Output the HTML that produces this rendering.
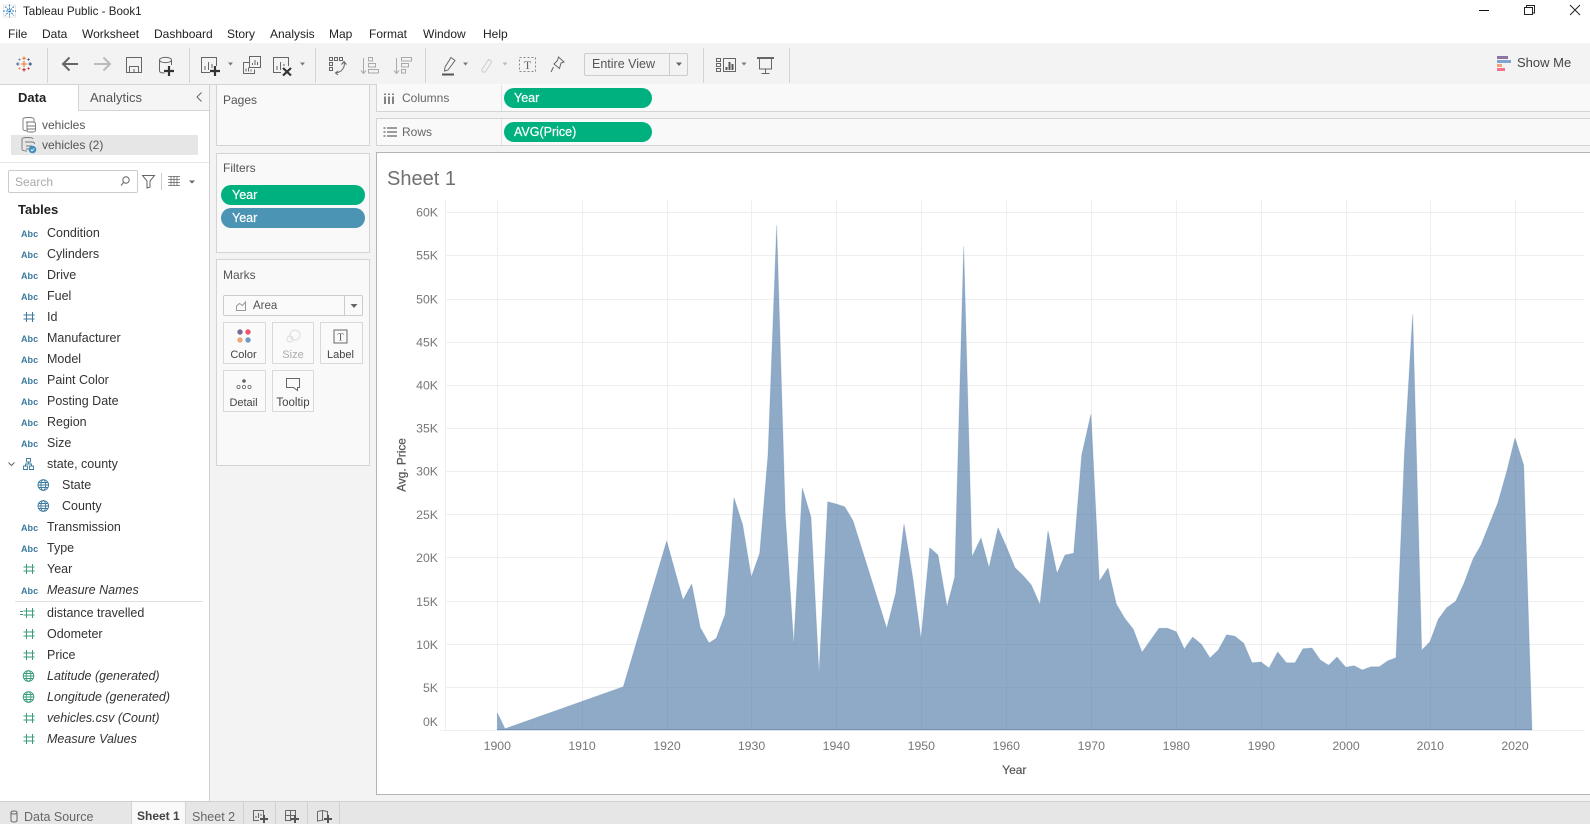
<!DOCTYPE html>
<html lang="en">
<head>
<meta charset="utf-8">
<title>Tableau Public - Book1</title>
<style>
html,body{margin:0;padding:0;background:#fff}
#p{position:relative;width:1590px;height:824px;overflow:hidden;background:#fff;font-family:"Liberation Sans",Arial,sans-serif;color:#333}
#p div{position:absolute;box-sizing:border-box}
.t{position:absolute;white-space:nowrap;line-height:16px;font-size:12px}
.f{font-size:12.5px;left:47px;color:#333}
.i{font-style:italic}
.a{position:absolute;left:21px;font-size:9px;font-weight:bold;color:#3b7a9e;line-height:12px;white-space:nowrap;letter-spacing:.05px}
.l{color:#555}
.b{text-align:center;font-size:11px;color:#444}
.c{background:#f9f9f9;border:1px solid #d4d4d4}
.k{background:#fafafa;border:1px solid #d9d9d9}
.pill{border-radius:10px;height:20px}
.pt{color:#fff;font-size:12.5px;-webkit-text-stroke:.2px #fff}
svg{position:absolute;left:0;top:0}
</style>
</head>
<body>
<div id="p">
<!-- toolbar -->
<div style="left:0;top:43px;width:1590px;height:42px;background:#f3f3f3;border-bottom:1px solid #d4d4d4"></div>
<!-- body bg -->
<div style="left:209px;top:85px;width:1381px;height:717px;background:#f3f3f3"></div>
<!-- left panel -->
<div style="left:0;top:85px;width:210px;height:717px;background:#fff;border-right:1px solid #d0d0d0"></div>
<div style="left:78px;top:85px;width:131px;height:26px;background:#f5f5f5;border-left:1px solid #d4d4d4;border-bottom:1px solid #d4d4d4"></div>
<div style="left:11px;top:135px;width:187px;height:20px;background:#e6e6e6"></div>
<div style="left:0;top:162px;width:209px;height:1px;background:#e6e6e6"></div>
<div style="left:8px;top:170px;width:130px;height:23px;background:#fff;border:1px solid #ccc;border-radius:2px"></div>
<div style="left:15px;top:601px;width:188px;height:1px;background:#e0e0e0"></div>
<!-- cards -->
<div class="c" style="left:216px;top:84px;width:154px;height:62px"></div>
<div class="c" style="left:216px;top:153px;width:154px;height:100px"></div>
<div class="pill" style="left:221px;top:185px;width:144px;background:#00b180"></div>
<div class="pill" style="left:221px;top:208px;width:144px;background:#4b94b3"></div>
<div class="c" style="left:216px;top:259px;width:154px;height:207px"></div>
<div style="left:223px;top:295px;width:140px;height:21px;background:#fafafa;border:1px solid #ccc;border-radius:2px"></div>
<div style="left:344px;top:296px;width:1px;height:19px;background:#ccc"></div>
<div class="k" style="left:223px;top:322px;width:43px;height:42px"></div>
<div class="k" style="left:272px;top:322px;width:42px;height:42px"></div>
<div class="k" style="left:320px;top:322px;width:43px;height:42px"></div>
<div class="k" style="left:223px;top:370px;width:43px;height:42px"></div>
<div class="k" style="left:272px;top:370px;width:42px;height:42px"></div>
<!-- shelves -->
<div style="left:376px;top:84px;width:1214px;height:28px;background:#f9f9f9;border-bottom:1px solid #d4d4d4;border-left:1px solid #d4d4d4"></div>
<div style="left:376px;top:118px;width:1214px;height:28px;background:#f9f9f9;border-top:1px solid #d4d4d4;border-bottom:1px solid #d4d4d4;border-left:1px solid #d4d4d4"></div>
<div style="left:501px;top:85px;width:1px;height:26px;background:#e0e0e0"></div>
<div style="left:501px;top:119px;width:1px;height:26px;background:#e0e0e0"></div>
<div class="pill" style="left:504px;top:88px;width:148px;background:#00b180"></div>
<div class="pill" style="left:504px;top:122px;width:148px;background:#00b180"></div>
<!-- view -->
<div style="left:376px;top:152px;width:1214px;height:643px;background:#fff;border:1px solid #b4b4b4;border-right:0"></div>
<!-- entire view -->
<div style="left:584px;top:53px;width:104px;height:23px;background:#f3f3f3;border:1px solid #ccc;border-radius:2px"></div>
<div style="left:669px;top:54px;width:1px;height:21px;background:#ccc"></div>
<!-- bottom -->
<div style="left:0;top:801px;width:1590px;height:23px;background:#e6e6e6;border-top:1px solid #d0d0d0"></div>
<div style="left:131px;top:802px;width:55px;height:22px;background:#f9f9f9;border-left:1px solid #d4d4d4;border-right:1px solid #d4d4d4"></div>
<div style="left:243px;top:802px;width:1px;height:22px;background:#d0d0d0"></div>
<div style="left:275px;top:802px;width:1px;height:22px;background:#d0d0d0"></div>
<div style="left:307px;top:802px;width:1px;height:22px;background:#d0d0d0"></div>
<div style="left:339px;top:802px;width:1px;height:22px;background:#d0d0d0"></div>

<svg width="1590" height="824" viewBox="0 0 1590 824" fill="none">
<!-- grid -->
<g stroke="#efefef" stroke-width="1" shape-rendering="crispEdges">
<path d="M445 212.5H1584M445 255.5H1584M445 299.5H1584M445 342.5H1584M445 385.5H1584M445 428.5H1584M445 471.5H1584M445 514.5H1584M445 557.5H1584M445 601.5H1584M445 644.5H1584M445 687.5H1584M440 730.5H1585"/>
<path d="M445.5 200V730M497.5 200V730M582.5 200V730M667.5 200V730M751.5 200V730M836.5 200V730M921.5 200V730M1006.5 200V730M1091.5 200V730M1176.5 200V730M1261.5 200V730M1346.5 200V730M1430.5 200V730M1515.5 200V730"/>
</g>
<polygon fill="#4e79a7" fill-opacity=".63" stroke="#4e79a7" stroke-opacity=".22" stroke-width="1" stroke-linejoin="bevel" points="497.3,730 497.3,712.7 505,728.7 623.3,686.7 666.7,541 683,600 691.7,584 700.3,627.7 709,643 716.3,638.3 725.3,614 734,497.7 742.7,525 751.3,577.3 759.7,553.3 768,455 776.7,225 785.3,515 793.7,644 802.3,488 811,517.3 819,674 827.7,501.7 836.3,504 844.7,506.7 853,520.7 886.7,628.3 895.7,593.3 904,524 912.7,577.3 921,639 929.7,547.7 938,555 947,606.7 954.7,577.3 963.7,246 972,556.7 981,538 989,567.7 998,527.7 1006.5,547 1015,567.7 1023.5,576 1031.3,585 1040,604.7 1048,530.7 1057,573.3 1065,555 1073.7,553.3 1081.7,455 1091,414 1099.3,581.3 1108,568 1116.3,604 1124.7,618.3 1133.3,629.3 1142,652.3 1159,628.3 1167.7,628.3 1176.3,631.7 1184.3,649 1192.7,637 1201.3,644.3 1210,658 1218.3,650 1226.7,634.7 1235,636.3 1243.7,643.3 1252,662.7 1261,662 1269,668 1277.7,652 1286.3,662.7 1295,662.7 1303,648.7 1312,648 1320.3,660 1328.7,665.3 1337,657 1345.7,667.3 1354,665.7 1362.3,670 1371,666.7 1379.3,666.7 1388,660.7 1396,657.7 1404.5,452 1412.7,314 1421.7,650.3 1430,641.7 1438.3,619.3 1446.7,607.7 1455.7,601.3 1464,583.3 1473,559 1481,545 1489,525 1497.7,503.3 1506.7,471.7 1515,438 1523.7,465 1532,730"/>
<path d="M497 729.5H1532" stroke="#7391b5" stroke-width="1"/>

<!-- window controls -->
<path d="M1479 10.5H1489" stroke="#111" stroke-width="1"/>
<path d="M1524.5 7.5H1532.5V14.5H1524.5ZM1526.5 7V5.5H1534.5V13H1533" stroke="#222" stroke-width="1"/>
<path d="M1570 5L1580 15M1580 5L1570 15" stroke="#222" stroke-width="1"/>

<!-- title logo -->
<rect x="3.5" y="5" width="12" height="12" stroke="#d8d8d8" stroke-width=".6"/>
<path d="M9.5 4.500v13M3 11h13M5 6.500l9 9M14 6.500l-9 9" stroke="#2f7fc0" stroke-width="1" stroke-dasharray="2 1"/>

<!-- tableau logo -->
<g stroke-width="1">
<path d="M21 64h6M24 61v6" stroke="#e8762b" stroke-width="1.100"/>
<path d="M24 56.500v3.500M22.200 58.200h3.600" stroke="#e8762b"/>
<path d="M24 68v3.500M22.200 69.800h3.600" stroke="#c72035"/>
<path d="M16 64h3.500M17.800 62.200v3.600" stroke="#5b6591"/>
<path d="M28.500 64h3.500M30.200 62.200v3.600" stroke="#1f457e"/>
<path d="M18.500 59.500h2M19.500 58.500v2" stroke="#59879b"/>
<path d="M27.500 59.500h2M28.500 58.500v2" stroke="#1f447e"/>
<path d="M18.500 68.500h2M19.500 67.500v2" stroke="#eb9129"/>
<path d="M27.500 68.500h2M28.500 67.500v2" stroke="#c72037"/>
</g>

<!-- toolbar separators -->
<path d="M47.5 48V83M189.5 48V83M315.5 48V83M425.5 48V83M703.5 48V83M789.5 48V83" stroke="#d4d4d4" stroke-width="1"/>

<path d="M78 64H63M69.5 57.5L63 64l6.5 6.5" stroke="#666" stroke-width="2"/>
<path d="M94 64h16M103.5 57.5L110 64l-6.5 6.5" stroke="#bbb" stroke-width="2"/>
<path d="M126.5 57.5h15v15h-15zM129.5 72.5v-6h9v6M134 69v3.5" stroke="#666" stroke-width="1"/>
<path d="M159.5 60c0-3.500 12-3.500 12 0c0 3.500-12 3.500-12 0zM159.500 60v11c0 1.500 2 2 5 2M171.500 60v5" stroke="#666" stroke-width="1"/>
<path d="M164 71h10M169 66v10" stroke="#333" stroke-width="2.200"/>

<path d="M216.500 66V57.500h-15v15H210M205 70v-4M208.500 70v-8M212 68v-4" stroke="#666" stroke-width="1"/>
<path d="M210 71h10M215 66v10" stroke="#333" stroke-width="2.200"/>
<path d="M228 62.500h5L230.500 65.500z" fill="#777"/>

<path d="M249.500 62.500h-6v11h11v-4" stroke="#666"/>
<path d="M249.500 56.500h11v11h-11zM252.500 65v-2M255 65v-5M257.500 65v-3M246 71.500v-3M248.500 71.500v-4M251 71.500v-2" stroke="#666"/>

<path d="M288.500 66V57.500h-15v15H281M277 70v-4M280.500 70v-8M284 66v-2" stroke="#666"/>
<path d="M283 68l8 7.500M291 68l-8 7.500" stroke="#333" stroke-width="2.200"/>
<path d="M300 62.500h5L302.500 65.500z" fill="#777"/>

<path d="M329.500 57.500h3v3h-3zM334.500 57.500h3v3h-3zM339.500 57.500h3v3h-3zM329.500 62.500h3v3h-3zM329.500 67.500h3v3h-3zM344 62c1.500 5-2 10-8 11" stroke="#666"/>
<path d="M341.500 64.500l2.500-3 2.500 3M338 71l-2.500 2 2.500 2" stroke="#666"/>

<path d="M363.500 58v15M361 70.500l2.500 3 2.500-3M368.500 57.500h4v3.500h-4zM368.500 63.500h7v3.500h-7zM368.500 69.500h10v3.500h-10z" stroke="#aaa"/>
<path d="M396.500 58v15M394 70.500l2.500 3 2.500-3M401.500 57.500h10v3.500h-10zM401.500 63.500h7v3.500h-7zM401.500 69.500h4v3.500h-4z" stroke="#aaa"/>

<path d="M451 57.500l4 3-7 9.500-3.500 1 .5-4z" stroke="#666"/>
<path d="M442 74.500h12" stroke="#555" stroke-width="2"/>
<path d="M463 62.500h5L465.500 65.500z" fill="#777"/>
<path d="M489 59l-6.500 9.500c-2 3 1.500 5 3.500 2.500l5-8c1.500-3-2-4-3.500-2l-4.500 7" stroke="#ccc" stroke-width="1"/>
<path d="M502.500 62.500h5L505 65.500z" fill="#bbb"/>
<rect x="519.500" y="57.500" width="16" height="14" stroke="#888" stroke-dasharray="2 2"/>
<text x="527.500" y="69" text-anchor="middle" font-family="Liberation Serif" font-size="12" fill="#666">T</text>
<path d="M558.500 57l5.500 5-3 1-1.500 5.500-5.500-4.500 3.500-3.500zM553.500 67l-2.500 5" stroke="#666"/>
<path d="M676 62.500h6L679 66z" fill="#666"/>

<path d="M716.500 58.500h4v3h-4zM716.500 63.500h4v3h-4zM716.500 68.500h4v3h-4zM723.500 58.500h12v13h-12z" stroke="#666"/>
<path d="M726.500 70v-3M729.500 70v-8M732.500 70v-6" stroke="#555" stroke-width="2"/>
<path d="M741.500 62.500h5L744 65.500z" fill="#777"/>
<path d="M757 58h17" stroke="#666" stroke-width="2"/>
<path d="M759.500 59v10h12V59M765.500 69v4.500M761.500 73.500h8" stroke="#666"/>

<!-- show me -->
<rect x="1497" y="56" width="11" height="3" fill="#8a76a0"/>
<rect x="1497" y="60" width="14" height="3" fill="#7fa4cf"/>
<rect x="1497" y="64" width="5" height="3" fill="#f2a37a"/>
<rect x="1497" y="68" width="8" height="3" fill="#f47284"/>

<!-- shelf icons -->
<path d="M385 96.500v7.500M389 96.500v7.500M393 96.500v7.500" stroke="#666" stroke-width="1.600"/>
<path d="M385 93.500v1.500M389 93.500v1.500M393 93.500v1.500" stroke="#666" stroke-width="1.600"/>
<path d="M387 128h10M387 132h10M387 136h10M383.500 128h2M383.500 132h2M383.500 136h2" stroke="#666" stroke-width="1.200"/>

<!-- chevron analytics -->
<path d="M201.500 92.500L197 97l4.500 4.500" stroke="#666"/>

<!-- datasource icons -->
<path d="M23 119c0-2 11-2 11 0M23 119v10c0 2 3 2 5 2M34 119v3M26 122h7c2 0 2.500 1 2.500 2v6c0 1.500-.5 2-2.500 2h-4c-1.500 0-2-1-2-2v-6c0-1.500 .5-2 1-2zM27 126h8M27 129h8" stroke="#777" stroke-width=".9"/>
<path d="M22 139c0-2 11-2 11 0M22 139v10c0 2 3 2 5 2M25 142h7c2 0 2.500 1 2.500 2M26 146h6M26 149h4" stroke="#777" stroke-width=".9"/>
<circle cx="32.500" cy="149.500" r="3.800" fill="#3f8fc0"/>
<path d="M30.800 149.500l1.200 1.300 2.200-2.300" stroke="#fff" stroke-width=".9"/>

<!-- search / filter -->
<circle cx="126" cy="180" r="3.200" stroke="#666"/>
<path d="M123.500 182.500l-2.500 3" stroke="#666"/>
<path d="M142.500 175.500h12l-4.500 5.500v6l-3 1v-7z" stroke="#666"/>
<path d="M161.500 173V190" stroke="#ccc"/>
<path d="M168 176.500h12M168 179.500h12M168 182.500h12M168 185.500h12M171 176v10M174 176v10M177 176v10" stroke="#666" stroke-width=".8"/>
<path d="M189 180.500h6L192 183.500z" fill="#666"/>

<!-- hash icons blue -->
<path d="M26.500 312v10m6-10v10m-9-3h11m-11-4h11" stroke="#3b7a9e" stroke-width="1"/>
<!-- hash icons green -->
<path d="M26.500 564v10m6-10v10m-9-3h11m-11-4h11M26.500 608v10m6-10v10m-9-3h11m-11-4h11M26.500 629v10m6-10v10m-9-3h11m-11-4h11M26.500 650v10m6-10v10m-9-3h11m-11-4h11M26.500 713v10m6-10v10m-9-3h11m-11-4h11M26.500 734v10m6-10v10m-9-3h11m-11-4h11M20 611.500h3M20 614.500h3" stroke="#3a9d78" stroke-width="1"/>

<!-- globes -->
<g stroke="#3b7a9e" stroke-width=".9">
<circle cx="43.300" cy="485" r="5.300"/><ellipse cx="43.300" cy="485" rx="2.400" ry="5.300"/><path d="M38 485h10.600M38.800 482.500h9M38.800 487.500h9"/>
<circle cx="43.300" cy="506" r="5.300"/><ellipse cx="43.300" cy="506" rx="2.400" ry="5.300"/><path d="M38 506h10.600M38.800 503.500h9M38.800 508.500h9"/>
</g>
<g stroke="#3a9d78" stroke-width=".9">
<circle cx="28.500" cy="676" r="5.300"/><ellipse cx="28.500" cy="676" rx="2.400" ry="5.300"/><path d="M23.200 676h10.600M24 673.500h9M24 678.500h9"/>
<circle cx="28.500" cy="697" r="5.300"/><ellipse cx="28.500" cy="697" rx="2.400" ry="5.300"/><path d="M23.200 697h10.600M24 694.500h9M24 699.500h9"/>
</g>
<!-- hierarchy -->
<path d="M26.500 458.500h4v3.500h-4zM23.500 466h4v3.500h-4zM29.500 466h4v3.500h-4zM28.500 462v2h-3v2M28.500 464h3v2" stroke="#3b7a9e" stroke-width=".9"/>
<path d="M8.500 462.500l3 3 3-3" stroke="#666"/>

<!-- marks dropdown icon -->
<path d="M236.500 310.500v-4.500l3-2.500 3 2 3-3.500v8.500z" stroke="#999"/>
<path d="M350.500 304h7L354 308z" fill="#666"/>
<!-- marks buttons -->
<circle cx="240" cy="332" r="2.700" fill="#7b6a96"/><circle cx="248" cy="332" r="2.700" fill="#f0566f"/>
<circle cx="240" cy="340" r="2.700" fill="#f0a47a"/><circle cx="248" cy="340" r="2.700" fill="#6f9ac6"/>
<circle cx="295" cy="335" r="5" stroke="#ddd"/><circle cx="290" cy="339" r="3" stroke="#ddd"/>
<rect x="334" y="330" width="13" height="13" stroke="#666"/>
<text x="340.500" y="340.500" text-anchor="middle" font-family="Liberation Serif" font-size="10" fill="#555">T</text>
<circle cx="244" cy="381" r="1.800" fill="#666"/>
<circle cx="238.500" cy="387" r="1.600" stroke="#666" stroke-width=".8"/><circle cx="244" cy="387" r="1.600" stroke="#666" stroke-width=".8"/><circle cx="249.500" cy="387" r="1.600" stroke="#666" stroke-width=".8"/>
<path d="M286.500 378.500h13v9h-2v3l-4-3h-7z" stroke="#666"/>

<!-- bottom icons -->
<path d="M11 812.500c0-2 6-2 6 0v8c0 2-6 2-6 0zM11 812.500c0 2 6 2 6 0" stroke="#666"/>
<path d="M263.500 815V810.500h-10v10H259M256 818v-2M258.500 818v-5M261 816v-2" stroke="#666"/>
<path d="M260 819h8M264 815v8" stroke="#555" stroke-width="2"/>
<path d="M285.500 810.500h10v5M285.500 810.500v10h6M285.500 815.500h10M290.500 810.500v10" stroke="#666"/>
<path d="M291 819h8M295 815v8" stroke="#555" stroke-width="2"/>
<path d="M317.500 811.500l5 -1 5 1v4M317.500 811.500v9.500l5-1 1 .5M322.500 810.500v9.500" stroke="#666"/>
<path d="M324 819h8M328 815v8" stroke="#555" stroke-width="2"/>

<!-- chart text -->
<g font-family="Liberation Sans" font-size="12.300" fill="#777" text-anchor="end">
<text x="438" y="216.500">60K</text><text x="438" y="259.500">55K</text><text x="438" y="303.500">50K</text><text x="438" y="346.500">45K</text><text x="438" y="389.500">40K</text><text x="438" y="432.500">35K</text><text x="438" y="475.500">30K</text><text x="438" y="519">25K</text><text x="438" y="562">20K</text><text x="438" y="606">15K</text><text x="438" y="649">10K</text><text x="438" y="692">5K</text><text x="438" y="726">0K</text>
</g>
<g font-family="Liberation Sans" font-size="12.300" fill="#777" text-anchor="middle">
<text x="497.300" y="750">1900</text><text x="582" y="750">1910</text><text x="667" y="750">1920</text><text x="751.500" y="750">1930</text><text x="836.300" y="750">1940</text><text x="921.300" y="750">1950</text><text x="1006.300" y="750">1960</text><text x="1091.300" y="750">1970</text><text x="1176.300" y="750">1980</text><text x="1261.300" y="750">1990</text><text x="1346" y="750">2000</text><text x="1430.300" y="750">2010</text><text x="1515" y="750">2020</text>
</g>
<text x="1014.300" y="774" text-anchor="middle" font-family="Liberation Sans" font-size="12" fill="#555" stroke="#555" stroke-width=".2">Year</text>
<text transform="translate(405.500 465) rotate(-90)" text-anchor="middle" font-family="Liberation Sans" font-size="11.800" fill="#555" stroke="#555" stroke-width=".25">Avg. Price</text>
<text x="387" y="185" font-family="Liberation Sans" font-size="20" fill="#707070">Sheet 1</text>
</svg>

<!-- title bar + menu -->
<span class="t" style="left:23px;top:4px;font-size:11.600px;color:#222">Tableau Public - Book1</span>
<span class="t" style="left:8px;top:26px;color:#222">File</span>
<span class="t" style="left:42px;top:26px;color:#222">Data</span>
<span class="t" style="left:82px;top:26px;color:#222">Worksheet</span>
<span class="t" style="left:154px;top:26px;color:#222">Dashboard</span>
<span class="t" style="left:227px;top:26px;color:#222">Story</span>
<span class="t" style="left:270px;top:26px;color:#222">Analysis</span>
<span class="t" style="left:329px;top:26px;color:#222">Map</span>
<span class="t" style="left:369px;top:26px;color:#222">Format</span>
<span class="t" style="left:423px;top:26px;color:#222">Window</span>
<span class="t" style="left:483px;top:26px;color:#222">Help</span>
<span class="t" style="left:592px;top:56px;font-size:12.500px;color:#555">Entire View</span>
<span class="t" style="left:1517px;top:55px;font-size:13px;color:#444">Show Me</span>

<!-- left panel text -->
<span class="t" style="left:18px;top:90px;font-size:13px;font-weight:bold;color:#222">Data</span>
<span class="t" style="left:90px;top:90px;font-size:13px;color:#555">Analytics</span>
<span class="t l" style="left:42px;top:117px">vehicles</span>
<span class="t l" style="left:42px;top:137px">vehicles (2)</span>
<span class="t" style="left:15px;top:174px;color:#aaa">Search</span>
<span class="t" style="left:18px;top:202px;font-size:13px;font-weight:bold;color:#222">Tables</span>

<span class="a" style="top:228px">Abc</span><span class="t f" style="top:225px">Condition</span>
<span class="a" style="top:249px">Abc</span><span class="t f" style="top:246px">Cylinders</span>
<span class="a" style="top:270px">Abc</span><span class="t f" style="top:267px">Drive</span>
<span class="a" style="top:291px">Abc</span><span class="t f" style="top:288px">Fuel</span>
<span class="t f" style="top:309px">Id</span>
<span class="a" style="top:333px">Abc</span><span class="t f" style="top:330px">Manufacturer</span>
<span class="a" style="top:354px">Abc</span><span class="t f" style="top:351px">Model</span>
<span class="a" style="top:375px">Abc</span><span class="t f" style="top:372px">Paint Color</span>
<span class="a" style="top:396px">Abc</span><span class="t f" style="top:393px">Posting Date</span>
<span class="a" style="top:417px">Abc</span><span class="t f" style="top:414px">Region</span>
<span class="a" style="top:438px">Abc</span><span class="t f" style="top:435px">Size</span>
<span class="t f" style="top:456px">state, county</span>
<span class="t f" style="top:477px;left:62px">State</span>
<span class="t f" style="top:498px;left:62px">County</span>
<span class="a" style="top:522px">Abc</span><span class="t f" style="top:519px">Transmission</span>
<span class="a" style="top:543px">Abc</span><span class="t f" style="top:540px">Type</span>
<span class="t f" style="top:561px">Year</span>
<span class="a" style="top:585px">Abc</span><span class="t f i" style="top:582px">Measure Names</span>
<span class="t f" style="top:605px">distance travelled</span>
<span class="t f" style="top:626px">Odometer</span>
<span class="t f" style="top:647px">Price</span>
<span class="t f i" style="top:668px">Latitude (generated)</span>
<span class="t f i" style="top:689px">Longitude (generated)</span>
<span class="t f i" style="top:710px">vehicles.csv (Count)</span>
<span class="t f i" style="top:731px">Measure Values</span>

<!-- cards text -->
<span class="t l" style="left:223px;top:92px">Pages</span>
<span class="t l" style="left:223px;top:160px">Filters</span>
<span class="t pt" style="left:232px;top:187px">Year</span>
<span class="t pt" style="left:232px;top:210px">Year</span>
<span class="t l" style="left:223px;top:267px">Marks</span>
<span class="t l" style="left:253px;top:298px;font-size:11.500px">Area</span>
<span class="t b" style="left:222px;width:43px;top:347px">Color</span>
<span class="t b" style="left:272px;width:42px;top:347px;color:#aaa">Size</span>
<span class="t b" style="left:319px;width:43px;top:347px">Label</span>
<span class="t b" style="left:222px;width:43px;top:395px">Detail</span>
<span class="t b" style="left:272px;width:42px;top:395px;font-size:11.500px">Tooltip</span>

<!-- shelves text -->
<span class="t" style="left:402px;top:90px;color:#666">Columns</span>
<span class="t" style="left:402px;top:124px;color:#666">Rows</span>
<span class="t pt" style="left:514px;top:90px">Year</span>
<span class="t pt" style="left:514px;top:124px">AVG(Price)</span>

<!-- bottom text -->
<span class="t" style="left:24px;top:809px;font-size:12.500px;color:#666">Data Source</span>
<span class="t" style="left:137px;top:808px;font-weight:bold;color:#444">Sheet 1</span>
<span class="t" style="left:192px;top:809px;font-size:12.500px;color:#666">Sheet 2</span>
</div>
</body>
</html>
